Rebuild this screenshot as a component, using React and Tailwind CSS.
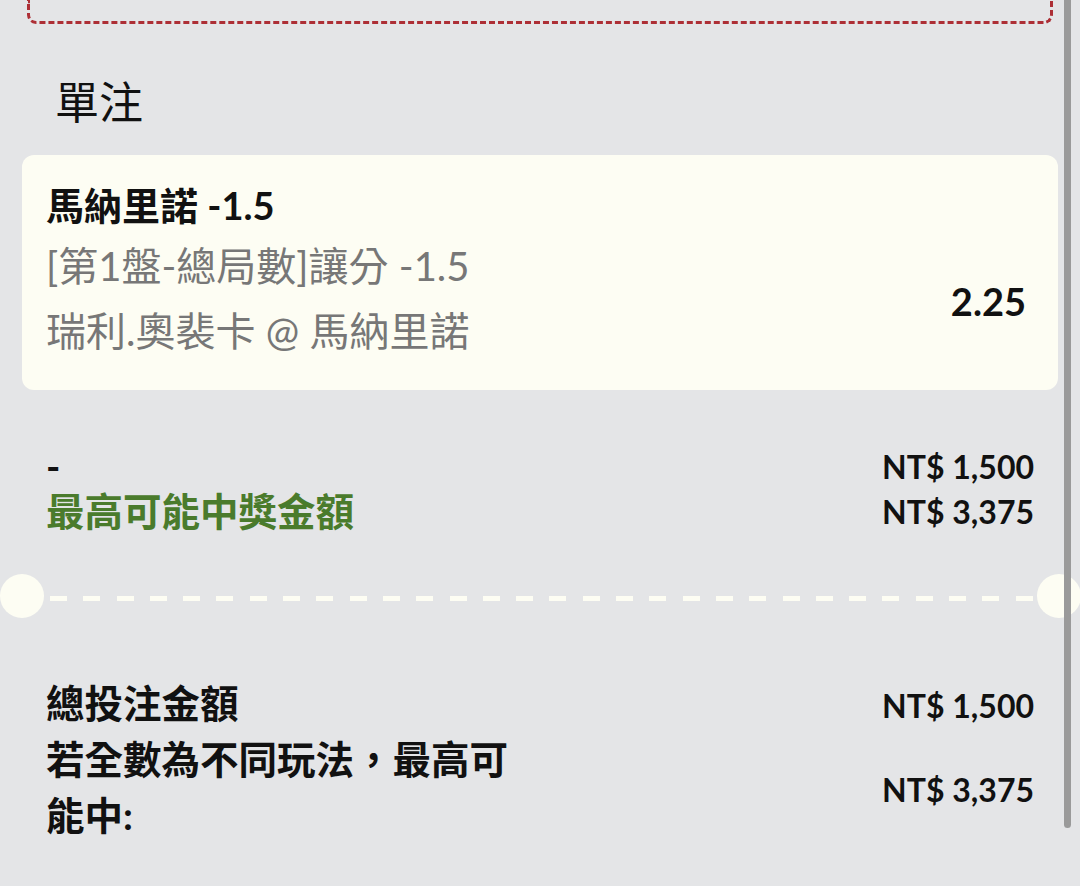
import React from 'react';

const FONT = { fontFamily: 'Lato, "Noto Sans CJK TC", sans-serif' };
const CJK = { fontFamily: '"Noto Sans CJK TC", sans-serif' };

const dashes = Array.from({ length: 30 });

const App = () => {
  return (
    <div
      className="relative w-[1080px] h-[886px] overflow-hidden bg-[#e4e5e7] text-[#111]"
      style={FONT}
    >
      {/* previous box edge */}
      <div className="mx-[27px] h-[24px] border-x-[3px] border-b-[3px] border-dashed border-[#ad2f36] rounded-b-[9px]" />

      {/* Title */}
      <h2 className="mt-[48px] pl-[55px] text-[44px] leading-[56px] font-normal" style={CJK}>單注</h2>

      {/* Bet card */}
      <div className="mt-[27px] mx-[22px] rounded-[12px] bg-[#fdfdf3] pl-[24px] pr-[32px] pt-[21px] pb-[26px]">
        <div className="text-[38px] leading-[58px] font-bold">馬納里諾 -1.5</div>
        <div className="flex items-center justify-between">
          <div className="text-[40px] text-[#777] leading-[65px]">
            <div>[第1盤-總局數]讓分 -1.5</div>
            <div>瑞利.奧裴卡 @ 馬納里諾</div>
          </div>
          <div className="text-[38px] font-bold leading-[58px] mt-[4px]">2.25</div>
        </div>
      </div>

      {/* Stake / max win */}
      <div className="mt-[54px] px-[46px] flex justify-between">
        <div className="text-[38.5px] font-bold leading-[45px]">
          <div>-</div>
          <div className="text-[#4a7b2c]">最高可能中獎金額</div>
        </div>
        <div className="text-right text-[32px] font-bold leading-[45px]">
          <div>NT$ 1,500</div>
          <div>NT$ 3,375</div>
        </div>
      </div>

      {/* Ticket separator */}
      <div className="mt-[40px] flex items-center">
        <div className="w-[44px] h-[44px] rounded-full bg-[#fdfdf3] shrink-0" />
        <div className="flex-1 flex justify-between ml-[6px] mr-[4px] mt-[5px]">
          {dashes.map((_, i) => (
            <span key={i} className="block w-[17px] h-[5px] bg-[#fdfdf3]" />
          ))}
        </div>
        <div className="w-[44px] h-[44px] rounded-full bg-[#fdfdf3] shrink-0 -mr-[1px]" />
      </div>

      {/* Totals */}
      <div className="mt-[59px] px-[46px] font-bold">
        <div className="flex items-center justify-between h-[54px]">
          <div className="text-[38.5px]">總投注金額</div>
          <div className="text-[32px] mt-[4px]">NT$ 1,500</div>
        </div>
        <div className="flex items-center justify-between">
          <div className="w-[480px] text-[38.5px] leading-[56px]">若全數為不同玩法，最高可能中:</div>
          <div className="text-[32px] mt-[6px]">NT$ 3,375</div>
        </div>
      </div>

      {/* scrollbar */}
      <div className="absolute top-0 right-[9px] w-[7px] h-[828px] rounded-b-full bg-[#9a9a9a]" />
    </div>
  );
};

export default App;
